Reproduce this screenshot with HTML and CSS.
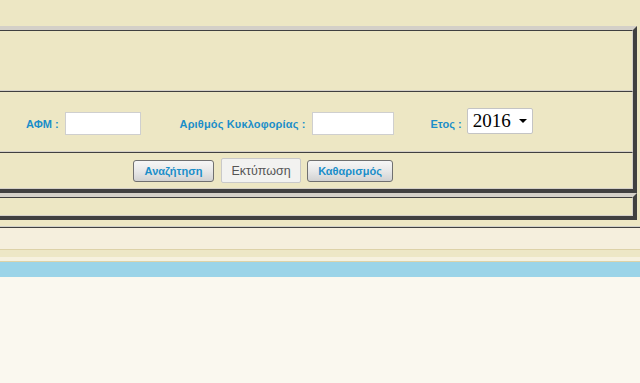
FILE: index.html
```html
<!DOCTYPE html>
<html>
<head>
<meta charset="utf-8">
<link rel="stylesheet" href="styles.css">
</head>
<body>
<div class="top-space"></div>
<div class="panel">
  <div class="cell cell-head"></div>
  <div class="cell cell-fields">
    <label class="lbl lbl-afm">ΑΦΜ :</label>
    <input class="txt txt-afm" type="text">
    <label class="lbl lbl-ak">Αριθμός Κυκλοφορίας :</label>
    <input class="txt txt-ak" type="text">
    <label class="lbl lbl-year">Ετος :</label>
    <span class="sel-wrap">
      <select class="sel"><option>2016</option></select>
    </span>
  </div>
  <div class="cell cell-buttons">
    <button class="btn btn-search">Αναζήτηση</button>
    <button class="btn-print">Εκτύπωση</button>
    <button class="btn btn-clear">Καθαρισμός</button>
  </div>
</div>
<div class="panel panel-second">
  <div class="cell cell-empty"></div>
</div>
<div class="gap"></div>
<div class="band band-cream"></div>
<div class="band band-beige"></div>
<div class="band band-light"></div>
<div class="band band-blue"></div>
<div class="rest"></div>
</body>
</html>
```
FILE: styles.css
```css
html, body {
  margin: 0;
  padding: 0;
}
body {
  background: #ede7c4;
  font-family: "Liberation Sans", Arial, sans-serif;
  overflow: hidden;
  height: 383px;
}
.top-space {
  height: 26px;
}
.panel {
  margin-right: 3px;
  border-top: 4px solid #d4d0c8;
  border-right: 4px solid #404040;
  border-bottom: 4px solid #404040;
  border-left: 0;
}
.cell {
  border-top: 1px solid #404040;
  border-bottom: 1px solid #d4d0c8;
  border-right: 1px solid #d4d0c8;
  background: #ede7c4;
  box-sizing: content-box;
}
.cell-head {
  height: 59px;
}
.cell-fields {
  display: flex;
  align-items: center;
  padding-left: 26px;
  padding-top: 1px;
  box-sizing: border-box;
  height: 61px;
}
.cell-buttons {
  height: 35px;
  display: flex;
  align-items: center;
  padding-left: 133px;
}
.cell-empty {
  height: 17px;
}
.lbl {
  font-size: 11px;
  font-weight: bold;
  color: #1a8ec9;
  white-space: nowrap;
  padding-top: 3px;
}
.txt {
  box-sizing: border-box;
  height: 23px;
  border: 1px solid #cfcfcf;
  background: #fff;
  margin: 0;
  padding: 0;
  margin-top: 2px;
}
.lbl-afm { margin-right: 6px; }
.txt-afm { width: 76px; margin-right: 39px; }
.lbl-ak { margin-right: 6px; letter-spacing: 0.15px; }
.txt-ak { width: 82px; margin-right: 37px; }
.lbl-year { margin-right: 5px; }
.sel-wrap {
  position: relative;
  display: inline-block;
  margin-top: -3px;
}
.sel {
  appearance: none;
  -webkit-appearance: none;
  box-sizing: border-box;
  width: 66px;
  height: 26px;
  border: 1px solid #c4c4c4;
  border-radius: 2px;
  background: #fff;
  font-family: "Liberation Serif", "Times New Roman", serif;
  font-size: 19px;
  color: #000;
  padding: 0 0 0 5px;
  margin: 0;
  display: block;
}
.sel-wrap::after {
  content: "";
  position: absolute;
  right: 6px;
  top: 11px;
  border-left: 4px solid transparent;
  border-right: 4px solid transparent;
  border-top: 4px solid #000;
}
.btn {
  box-sizing: border-box;
  height: 22px;
  border: 1px solid #707070;
  border-radius: 3px;
  background: linear-gradient(to bottom, #f6f6f6 0%, #e8e8e8 50%, #d2d2d2 100%);
  font-family: "Liberation Sans", Arial, sans-serif;
  font-size: 11px;
  font-weight: bold;
  color: #1a8ec9;
  padding: 0;
  margin: 0;
}
.btn-search { width: 81px; margin-right: 7px; }
.btn-clear { width: 86px; }
.btn-print {
  box-sizing: border-box;
  width: 80px;
  height: 25px;
  border: 1px solid #c9c9c9;
  border-radius: 2px;
  background: #f2f2f0;
  font-family: "Liberation Sans", Arial, sans-serif;
  font-size: 12.5px;
  color: #555;
  padding: 0;
  margin: 0 6px 0 0;
}
.gap {
  height: 6px;
  border-bottom: 1px solid #d0d0c8;
}
.band-cream {
  height: 21px;
  background: #f5efdd;
  border-top: 1px solid #404040;
  border-bottom: 1px solid #ddd2a8;
}
.band-beige {
  height: 7px;
  background: #ede7c6;
}
.band-light {
  height: 4px;
  background: #f6f1df;
  border-bottom: 1px solid #ddd2a8;
}
.band-blue {
  height: 15px;
  background: #9bd4e8;
}
.rest {
  height: 120px;
  background: #faf8ef;
}
```
